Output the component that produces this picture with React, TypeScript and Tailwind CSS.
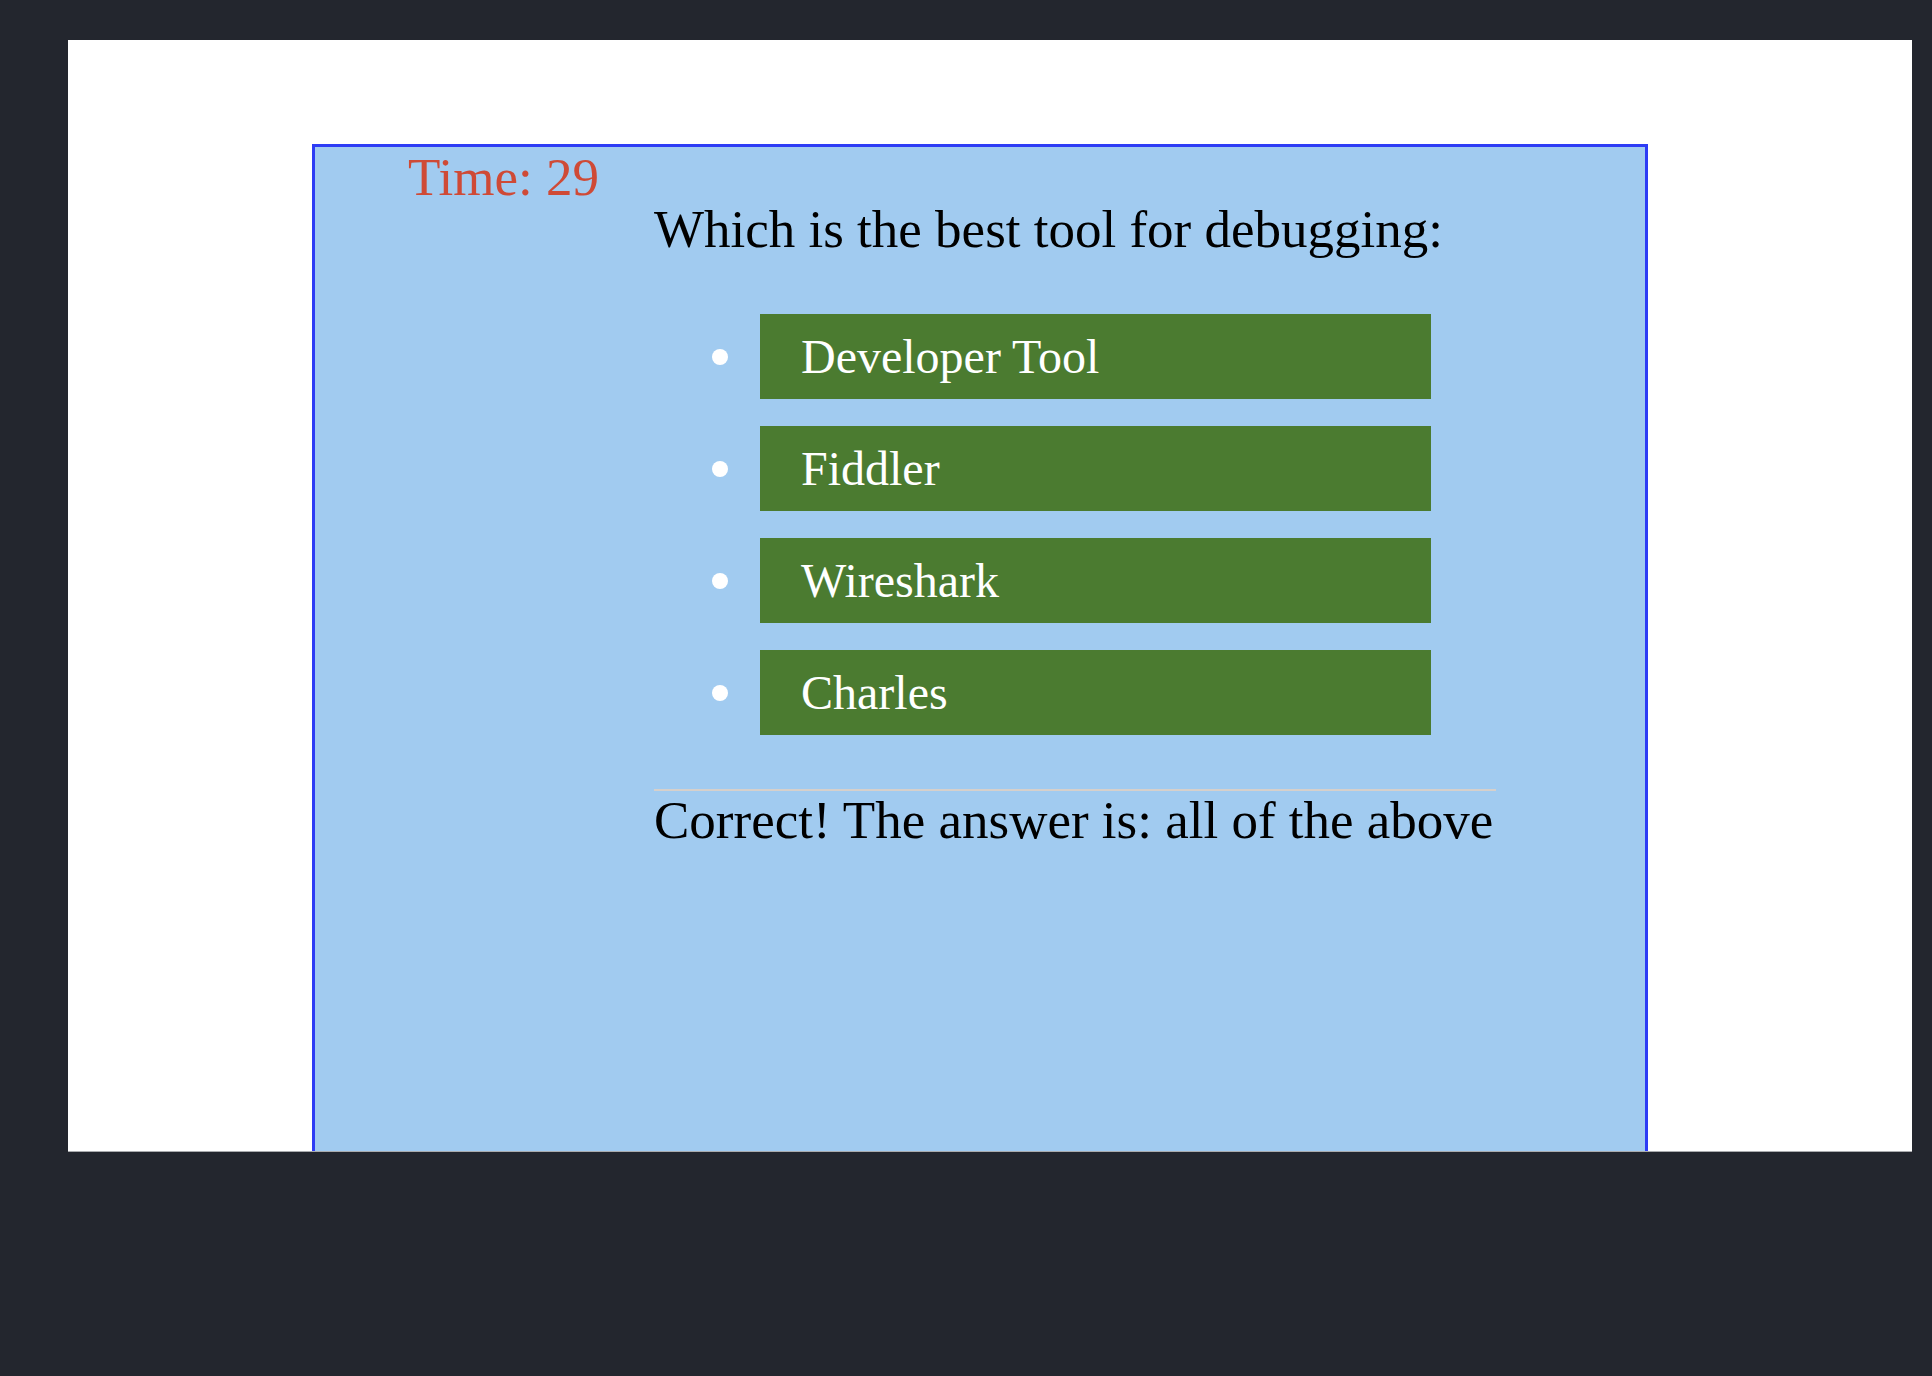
const OPTIONS = ['Developer Tool', 'Fiddler', 'Wireshark', 'Charles'];

export default function App() {
  return (
    <div className="h-[1376px] w-full overflow-hidden bg-[#23262e] pt-[40px] pl-[68px]">
      {/* page viewport */}
      <div className="h-[1112px] w-[1844px] overflow-hidden border-b border-[#a9abae] bg-white pt-[104px] pl-[244px]">
        {/* quiz card */}
        <div
          className="h-[1100px] w-[1336px] border-[3px] border-[#2d3cf5] bg-[#a1cbf0] text-black"
          style={{ fontFamily: '"Liberation Serif", "Times New Roman", serif' }}
        >
          <div className="ml-[93px] pt-[4px] text-[53px] leading-[52px] text-[#cf4a36]">Time: 29</div>

          <div className="ml-[339px] w-[842px]">
            <div className="text-[53px] leading-[52px]">Which is the best tool for debugging:</div>

            <ul className="mt-[59px] flex flex-col gap-[27px]">
              {OPTIONS.map((opt) => (
                <li key={opt} className="flex items-center pl-[58px]">
                  <span className="h-4 w-4 shrink-0 rounded-full bg-white" />
                  <div className="ml-[32px] flex h-[85px] w-[671px] items-center bg-[#4b7b30] pl-[41px] text-[48px] text-white">
                    {opt}
                  </div>
                </li>
              ))}
            </ul>

            <div className="mt-[54px] h-[2px] bg-[#d6d0cb]" />
            <div className="mt-[3px] text-[53px] leading-[52px]">Correct! The answer is: all of the above</div>
          </div>
        </div>
      </div>
    </div>
  );
}
